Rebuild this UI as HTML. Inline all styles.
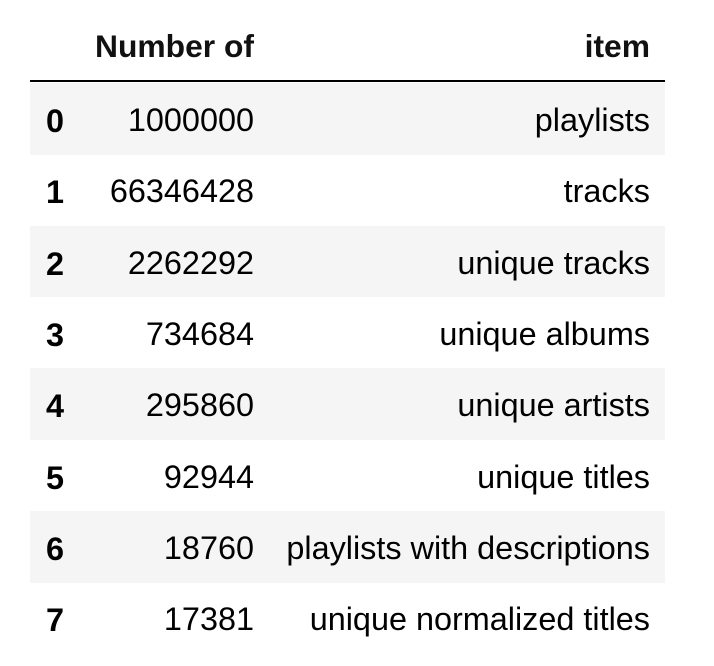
<!DOCTYPE html>
<html><head><meta charset="utf-8"><style>
html,body{margin:0;padding:0;background:#fff;width:714px;height:666px;overflow:hidden}
body{font-family:"Liberation Sans",Arial,sans-serif;color:#000;position:relative}
.t{position:absolute;font-size:32.4px;line-height:36px;white-space:nowrap}
.r{text-align:right}
.b{font-weight:bold}
.bg{position:absolute;left:30px;width:635px;background:#f5f5f5}
.rule{position:absolute;left:30px;width:635px;top:80px;height:2px;background:#000}
.h{font-size:31.8px;top:28px;font-weight:bold;color:#111}
</style></head><body>
<div class="rule"></div>
<div class="t h r" style="right:460px">Number of</div>
<div class="t h r" style="right:64px">item</div>

<div class="bg" style="top:83px;height:71.5px"></div>
<div class="bg" style="top:225.7px;height:71.5px"></div>
<div class="bg" style="top:368.3px;height:71.5px"></div>
<div class="bg" style="top:511px;height:71.5px"></div>

<div class="t b" style="left:46px;top:103px">0</div>
<div class="t r" style="right:460px;top:102px">1000000</div>
<div class="t r" style="right:64px;top:102px">playlists</div>

<div class="t b" style="left:46px;top:174.3px">1</div>
<div class="t r" style="right:460px;top:173.3px">66346428</div>
<div class="t r" style="right:64px;top:173.3px">tracks</div>

<div class="t b" style="left:46px;top:245.7px">2</div>
<div class="t r" style="right:460px;top:244.7px">2262292</div>
<div class="t r" style="right:64px;top:244.7px">unique tracks</div>

<div class="t b" style="left:46px;top:317px">3</div>
<div class="t r" style="right:460px;top:316px">734684</div>
<div class="t r" style="right:64px;top:316px">unique albums</div>

<div class="t b" style="left:46px;top:388.3px">4</div>
<div class="t r" style="right:460px;top:387.3px">295860</div>
<div class="t r" style="right:64px;top:387.3px">unique artists</div>

<div class="t b" style="left:46px;top:459.7px">5</div>
<div class="t r" style="right:460px;top:458.7px">92944</div>
<div class="t r" style="right:64px;top:458.7px">unique titles</div>

<div class="t b" style="left:46px;top:531px">6</div>
<div class="t r" style="right:460px;top:530px">18760</div>
<div class="t r" style="right:64px;top:530px">playlists with descriptions</div>

<div class="t b" style="left:46px;top:602.3px">7</div>
<div class="t r" style="right:460px;top:601.3px">17381</div>
<div class="t r" style="right:64px;top:601.3px">unique normalized titles</div>
</body></html>
